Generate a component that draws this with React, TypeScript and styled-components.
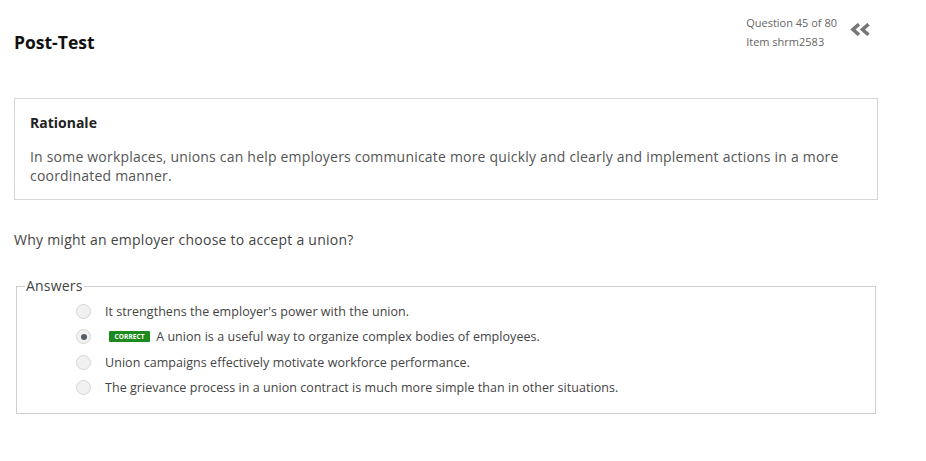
import React from "react";
import styled, { createGlobalStyle } from "styled-components";

const Global = createGlobalStyle`
  html, body { margin: 0; padding: 0; background: #fff; }
  body { font-family: "Open Sans", "Liberation Sans", sans-serif; color: #444; }
`;

const Page = styled.div`
  width: 926px;
  height: 461px;
  box-sizing: border-box;
  padding: 0 48px 0 14px;
`;

const Header = styled.header`
  display: flex;
  justify-content: space-between;
  align-items: flex-start;
  height: 98px;
`;

const Title = styled.h1`
  margin: 30px 0 0 0;
  font-size: 17.5px;
  font-weight: 700;
  color: #111;
`;

const Meta = styled.div`
  display: flex;
  align-items: flex-start;
  gap: 13px;
  margin: 13px 7px 0 0;
`;

const MetaText = styled.div`
  font-size: 11px;
  line-height: 19px;
  color: #666;
`;

const Collapse = styled.svg`
  margin-top: 10px;
  width: 21px;
  height: 13px;
`;

const RationaleBox = styled.section`
  width: 864px;
  box-sizing: border-box;
  border: 1px solid #d6d6d6;
  padding: 14px 15px 14px 15px;
`;

const RationaleTitle = styled.h2`
  margin: 0 0 15px 0;
  font-size: 14px;
  font-weight: 700;
  color: #222;
`;

const RationaleText = styled.p`
  margin: 0;
  font-size: 14px;
  line-height: 19px;
  color: #555;
  letter-spacing: 0.2px;
`;

const Question = styled.p`
  margin: 30px 0 0 0;
  font-size: 14px;
  line-height: 20px;
  color: #444;
  letter-spacing: 0.25px;
`;

const Fieldset = styled.fieldset`
  margin: 29px 0 0 2px;
  width: 860px;
  box-sizing: border-box;
  border: 1px solid #cfcfcf;
  padding: 6px 0 13px 8px;
`;

const Legend = styled.legend`
  font-size: 14px;
  color: #444;
  padding: 0 1px;
  line-height: 14px;
  letter-spacing: 0.2px;
`;

const List = styled.div`
  display: flex;
  flex-direction: column;
  padding-left: 51px;
`;

const Row = styled.label`
  display: flex;
  align-items: center;
  height: 25.3px;
  font-size: 12.5px;
  color: #444;
  letter-spacing: 0.05px;
`;

const Radio = styled.span<{ $checked?: boolean }>`
  width: 15px;
  height: 15px;
  border-radius: 50%;
  border: 1px solid #d6d6d6;
  background: #f1f1f1;
  box-sizing: border-box;
  display: flex;
  align-items: center;
  justify-content: center;
  margin-right: 14px;
  &::after {
    content: "";
    display: ${(p) => (p.$checked ? "block" : "none")};
    width: 6px;
    height: 6px;
    border-radius: 50%;
    background: #555c66;
  }
`;

const Badge = styled.span`
  background: #1c8a1c;
  color: #fff;
  font-size: 6.5px;
  font-weight: 700;
  padding: 0 5.5px;
  height: 11px;
  line-height: 11px;
  border-radius: 1px;
  margin: 0 6px 0 4px;
  letter-spacing: 0.1px;
`;

const answers = [
  { text: "It strengthens the employer's power with the union." },
  { text: "A union is a useful way to organize complex bodies of employees.", correct: true },
  { text: "Union campaigns effectively motivate workforce performance." },
  { text: "The grievance process in a union contract is much more simple than in other situations." },
];

export default function App() {
  return (
    <>
      <Global />
      <Page>
        <Header>
          <Title>Post-Test</Title>
          <Meta>
            <MetaText>
              <div>Question 45 of 80</div>
              <div>Item shrm2583</div>
            </MetaText>
            <Collapse viewBox="0 0 21 13">
              <path d="M9 1.2 L3 6.5 L9 11.8" fill="none" stroke="#777" strokeWidth="3.6" />
              <path d="M18.5 1.2 L12.5 6.5 L18.5 11.8" fill="none" stroke="#777" strokeWidth="3.6" />
            </Collapse>
          </Meta>
        </Header>
        <RationaleBox>
          <RationaleTitle>Rationale</RationaleTitle>
          <RationaleText>
            In some workplaces, unions can help employers communicate more quickly and clearly and implement actions in a more coordinated manner.
          </RationaleText>
        </RationaleBox>
        <Question>Why might an employer choose to accept a union?</Question>
        <Fieldset>
          <Legend>Answers</Legend>
          <List>
            {answers.map((a, i) => (
              <Row key={i}>
                <Radio $checked={a.correct} />
                {a.correct && <Badge>CORRECT</Badge>}
                {a.text}
              </Row>
            ))}
          </List>
        </Fieldset>
      </Page>
    </>
  );
}
